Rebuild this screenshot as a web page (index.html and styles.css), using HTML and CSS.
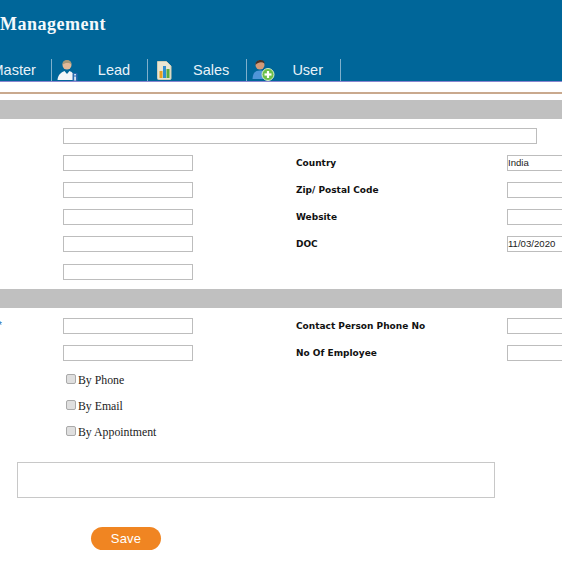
FILE: index.html
```html
<!DOCTYPE html>
<html lang="en">
<head>
<meta charset="utf-8">
<title>Management</title>
<link rel="stylesheet" href="styles.css">
</head>
<body>
<header class="header">
  <h1 class="title">Management</h1>
  <nav class="nav">
    <a class="nav-item first"><span class="nav-label">Master</span></a>
    <a class="nav-item">
      <span class="nav-icon">
        <svg width="22" height="23" viewBox="0 0 22 23"><circle cx="10" cy="6" r="4.500" fill="#e0b898"/><path d="M5.500 6 C4.500 -0.500 15 -0.500 14.500 5.500 C12 3.500 8 3.500 5.500 6Z" fill="#a89878"/><path d="M0.500 21 C1 15 5 13 7.500 12 L10 15 L12.500 12 C15 13 17 14 17.500 21Z" fill="#f2f5f8"/><rect x="15.500" y="14" width="5" height="8" rx="1" fill="#2a6cb0"/><rect x="17.300" y="15" width="1.500" height="1.500" fill="#fff"/><rect x="17.300" y="17.500" width="1.500" height="4" fill="#fff"/></svg>
      </span>
      <span class="nav-label">Lead</span>
    </a>
    <a class="nav-item">
      <span class="nav-icon sales-icon">
        <svg width="16" height="19" viewBox="0 0 16 19"><path d="M1.500 0.500H10.500L15 5V17.500Q15 18.500 14 18.500H2.500Q1.500 18.500 1.500 17.500Z" fill="#e9e6d2" stroke="#cfcdb6"/><rect x="3.500" y="10" width="3" height="7" fill="#e8a020"/><rect x="7" y="5" width="3" height="12" fill="#2f8fd0"/><rect x="10.500" y="8" width="3" height="9" fill="#5cab3c"/></svg>
      </span>
      <span class="nav-label">Sales</span>
    </a>
    <a class="nav-item">
      <span class="nav-icon">
        <svg width="23" height="23" viewBox="0 0 23 23"><circle cx="8" cy="6" r="4.500" fill="#d29a78"/><path d="M3.500 6 C3 0 13 -0.500 12.500 4.500 C10 2.500 6 3 3.500 6Z" fill="#4a3226"/><path d="M0.500 20 C1 13 4 11.500 8 11.500 C12 11.500 15 13 15.500 20Z" fill="#4f95d8"/><circle cx="16" cy="15.500" r="6" fill="#6cc04a" stroke="#d8f0c8"/><rect x="12.500" y="14.400" width="7" height="2.200" fill="#fff"/><rect x="14.900" y="12" width="2.200" height="7" fill="#fff"/></svg>
      </span>
      <span class="nav-label">User</span>
    </a>
  </nav>
</header>
<div class="rule"></div>

<main class="content">
  <div class="band"></div>
  <form class="form">
    <div class="row first-row"><input class="field wide" type="text"></div>
    <div class="row"><input class="field" type="text"><label class="label">Country</label><input class="field small" type="text" value="India"></div>
    <div class="row"><input class="field" type="text"><label class="label">Zip/ Postal Code</label><input class="field small" type="text"></div>
    <div class="row"><input class="field" type="text"><label class="label">Website</label><input class="field small" type="text"></div>
    <div class="row"><input class="field" type="text"><label class="label">DOC</label><input class="field small" type="text" value="11/03/2020"></div>
    <div class="row last-row"><input class="field" type="text"></div>

    <div class="band second"></div>

    <div class="row first-row tight"><span class="mark">*</span><input class="field" type="text"><label class="label">Contact Person Phone No</label><input class="field small" type="text"></div>
    <div class="row"><input class="field" type="text"><label class="label">No Of Employee</label><input class="field small" type="text"></div>

    <div class="checks">
      <label class="check"><input type="checkbox" class="box">By Phone</label>
      <label class="check"><input type="checkbox" class="box">By Email</label>
      <label class="check"><input type="checkbox" class="box">By Appointment</label>
    </div>

    <textarea class="notes"></textarea>
    <button class="save" type="button">Save</button>
  </form>
</main>
</body>
</html>
```

FILE: styles.css
```css
* { box-sizing: border-box; }

html, body {
  margin: 0;
  height: 562px;
  overflow: hidden;
  background: #fff;
}

body { font-family: "Liberation Sans", Arial, sans-serif; }

.header {
  height: 82px;
  background: #006699;
  border-bottom: 1px solid #8a86d0;
  display: flex;
  flex-direction: column;
}

.title {
  margin: 13px 0 0 0;
  font: bold 18px/22px "Liberation Serif", serif;
  color: #f4f8fb;
  letter-spacing: 0.5px;
}

.nav {
  display: flex;
  margin-top: 24px;
  height: 22px;
  margin-left: -8.500px;
}

.nav-item {
  display: flex;
  align-items: center;
  height: 22px;
  padding-right: 16.500px;
  border-right: 1px solid #7fb0cc;
  color: #e8f2f8;
  font-size: 14.500px;
}

.nav-item.first { padding-right: 15.500px; }

.nav-icon {
  flex: none;
  width: 45.500px;
  padding-left: 5px;
  display: flex;
  align-items: center;
}

.nav-icon.sales-icon { padding-left: 8px; }

.nav-label { line-height: 22px; }

.rule {
  height: 2px;
  margin-top: 10px;
  background: #c9a98e;
}

.content { padding-top: 6px; }

.band {
  height: 19px;
  background: #c0c0c0;
}

.band.second { margin-top: 9px; }

.row {
  display: flex;
  align-items: center;
  height: 16px;
  margin-top: 11px;
  padding-left: 63px;
  position: relative;
}

.row.first-row { margin-top: 9px; }
.row.tight { margin-top: 10px; }
.row.last-row { margin-top: 12px; }

.field {
  flex: none;
  width: 130px;
  height: 16px;
  padding: 0 0 2px 0;
  border: 1px solid #bdbdbd;
  background: #fff;
  font: 9.600px "Liberation Sans", Arial, sans-serif;
  color: #222;
  outline: none;
}

.field.wide { width: 474px; }

.label {
  flex: none;
  width: 211px;
  margin-left: 103px;
  padding-bottom: 1px;
  font: bold 9px "DejaVu Sans", Verdana, sans-serif;
  color: #111;
}

.field.small { width: 120px; }

.mark {
  position: absolute;
  left: -2px;
  top: 2px;
  font-size: 10px;
  color: #2a6cb0;
}

.checks {
  display: flex;
  flex-direction: column;
  gap: 12px;
  margin-top: 12px;
  padding-left: 66px;
}

.check {
  display: flex;
  align-items: center;
  height: 14px;
  font: 11.800px/14px "Liberation Serif", serif;
  color: #222;
}

.box {
  appearance: none;
  width: 10px;
  height: 10px;
  margin: 0 2px 2px 0;
  border: 1px solid #aaa;
  border-radius: 2px;
  background: #dfdfdf;
}

.notes {
  display: block;
  width: 478px;
  height: 36px;
  margin: 23px 0 0 17px;
  border: 1px solid #c8c8c8;
  background: #fff;
  resize: none;
  outline: none;
}

.save {
  display: block;
  width: 70px;
  height: 23px;
  margin: 29px 0 0 91px;
  border: 0;
  border-radius: 12px;
  background: #f08522;
  color: #fff;
  font: 13px "Liberation Sans", Arial, sans-serif;
  letter-spacing: 0.2px;
}
```
